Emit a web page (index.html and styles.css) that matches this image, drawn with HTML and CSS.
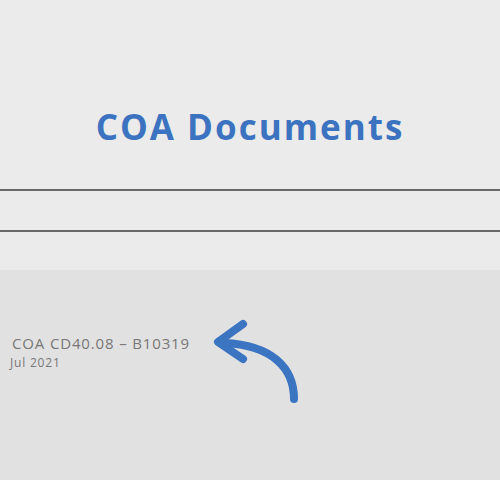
FILE: index.html
```html
<!DOCTYPE html>
<html lang="en">
<head>
    <meta charset="UTF-8">
    <meta name="viewport" content="width=device-width, initial-scale=1.0">
    <link rel="stylesheet" href="styles.css">
    <title>COA Documents</title>
</head>
<body>

    <!-- Page heading -->
    <header class="page-head">
        <h1>COA Documents</h1>
    </header>

    <!-- Filter bar placeholder between rules -->
    <div class="rule"></div>
    <div class="band"></div>
    <div class="rule"></div>
    <div class="band band-low"></div>

    <!-- Document list -->
    <section class="docs">
        <div class="doc-row">
            <a href="#" class="doc-item">
                <span class="doc-name">COA CD40.08 &ndash; B10319</span>
                <span class="doc-date">Jul 2021</span>
            </a>
            <svg class="doc-arrow" width="90" height="90" viewBox="0 0 90 90" aria-hidden="true">
                <path d="M84 83 C84 52 62 29 14 27" fill="none" stroke="#3b74c1" stroke-width="8" stroke-linecap="round"/>
                <path d="M33 8 L8 26 L33 43" fill="none" stroke="#3b74c1" stroke-width="8" stroke-linecap="round" stroke-linejoin="round"/>
            </svg>
        </div>
    </section>

</body>
</html>
```

FILE: styles.css
```css
body {
    margin: 0;
    padding: 0;
    background-color: #ebebeb;
    font-family: 'Open Sans', 'Liberation Sans', sans-serif;
}
/* Heading */
.page-head {
    height: 189px;
    display: flex;
    justify-content: center;
    align-items: center;
}
.page-head h1 {
    margin: 0;
    padding-top: 63px;
    font-size: 35px;
    font-weight: 700;
    color: #3b73c1;
    letter-spacing: 2px;
}
.rule {
    height: 2px;
    background-color: #686868;
}
.band {
    height: 39px;
}
.band-low {
    height: 38px;
}
/* Document list */
.docs {
    background-color: #e1e1e1;
    height: 210px;
}
.doc-row {
    display: flex;
    align-items: flex-start;
    padding-top: 63px;
}
.doc-item {
    display: flex;
    flex-direction: column;
    text-decoration: none;
    color: #777;
}
.doc-name {
    padding-left: 12px;
    font-size: 15px;
    line-height: 21px;
    letter-spacing: 0.85px;
}
.doc-date {
    padding-left: 10px;
    font-size: 12px;
    line-height: 17px;
    letter-spacing: 0.8px;
}
.doc-arrow {
    margin-top: -17px;
    margin-left: 20px;
}
```
